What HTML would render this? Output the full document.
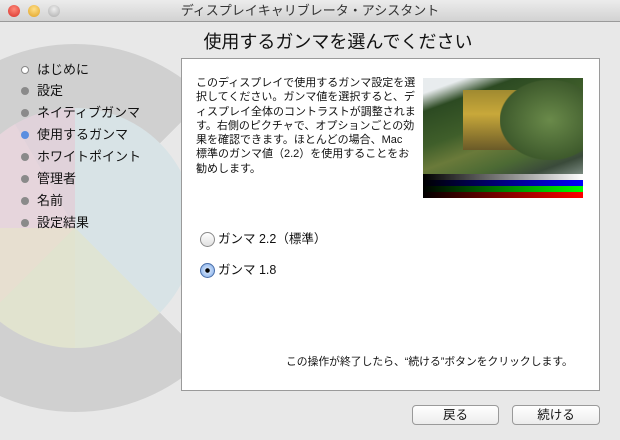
<!DOCTYPE html>
<html><head><meta charset="utf-8"><style>
*{margin:0;padding:0;box-sizing:border-box}
body{width:620px;height:440px;overflow:hidden;background:#e8e8e8;font-family:"Liberation Sans","Noto Sans CJK JP",sans-serif;color:#111;position:relative}
.tb{position:absolute;left:0;top:0;width:620px;height:22px;background:linear-gradient(#ececec,#d2d2d2);border-bottom:1px solid #9a9a9a;text-align:center;font-size:13px;line-height:22px;color:#333}
.l{position:absolute;top:5px;width:12px;height:12px;border-radius:50%}
.abs{position:absolute}
.side div{position:absolute;left:37px;font-size:13px;height:16px;line-height:16px}
.side i{position:absolute;left:-16px;top:4px;width:8px;height:8px;border-radius:50%;background:#8a8a8a}
.panel{position:absolute;left:181px;top:58px;width:419px;height:333px;background:#fff;border:1px solid #9a9a9a}
.desc{position:absolute;left:196px;top:76px;font-size:11px;line-height:14.3px;white-space:nowrap}
.btn{position:absolute;top:405px;height:20px;border:1px solid #9a9a9a;border-radius:4px;background:linear-gradient(#fff,#ececec);font-size:12.5px;text-align:center;line-height:18px}
.radio{position:absolute;left:200px;width:15px;height:15px;border-radius:50%;border:1px solid #8a8a8a;background:linear-gradient(#fff,#e0e0e0)}
</style></head><body>
<div class="abs" style="left:-109px;top:44px;width:368px;height:368px;border-radius:50%;background:conic-gradient(from 0deg,#d0d0d0 0deg 45deg,transparent 45deg 135deg,#d0d0d0 135deg 360deg)"></div>
<div class="abs" style="left:-45px;top:108px;width:240px;height:240px;border-radius:50%;background:conic-gradient(from 0deg,#d8e3e6 0deg 135deg,#dfe4d4 135deg 180deg,#e1e3cf 180deg 225deg,#e7dfd0 225deg 270deg,#e6d5dc 270deg 330deg,#e0d2da 330deg 360deg)"></div>
<div class="tb">
<span class="l" style="left:8px;background:radial-gradient(circle at 50% 35%,#ff8a7a,#d8302a)"></span>
<span class="l" style="left:28px;background:radial-gradient(circle at 50% 35%,#ffe08a,#e0a020)"></span>
<span class="l" style="left:48px;background:radial-gradient(circle at 50% 35%,#eee,#aaa)"></span>
ディスプレイキャリブレータ・アシスタント</div>
<div class="abs" style="top:30px;width:320px;text-align:center;font-size:18px;line-height:24px;color:#111;left:178px">使用するガンマを選んでください</div>
<div class="side">
<div style="top:62px"><i style="background:#fff;border:1px solid #888"></i>はじめに</div>
<div style="top:83px"><i></i>設定</div>
<div style="top:105px"><i></i>ネイティブガンマ</div>
<div style="top:127px"><i style="background:#5a8ee0"></i>使用するガンマ</div>
<div style="top:149px"><i></i>ホワイトポイント</div>
<div style="top:171px"><i></i>管理者</div>
<div style="top:193px"><i></i>名前</div>
<div style="top:215px"><i></i>設定結果</div>
</div>
<div class="panel"></div>
<div class="desc">このディスプレイで使用するガンマ設定を選<br>択してください。ガンマ値を選択すると、デ<br>ィスプレイ全体のコントラストが調整されま<br>す。右側のピクチャで、オプションごとの効<br>果を確認できます。ほとんどの場合、Mac<br>標準のガンマ値（2.2）を使用することをお<br>勧めします。</div>
<div class="abs" style="left:423px;top:78px;width:160px;height:96px;background:linear-gradient(160deg,#e8ecee 0%,#e8ecee 10%,#2c4a22 22%,#3f5e2a 45%,#6a7a3a 60%,#4c6a34 75%,#3a4a3a 88%,#7a8a80 100%)"></div>
<div class="abs" style="left:463px;top:90px;width:55px;height:60px;background:linear-gradient(#a08a30,#c8a83a 40%,#6a5a28)"></div>
<div class="abs" style="left:500px;top:80px;width:83px;height:80px;background:radial-gradient(ellipse at 60% 50%,#6a8a4a,#3e5a2c 70%,transparent 72%)"></div>
<div class="abs" style="left:423px;top:174px;width:160px;height:6px;background:linear-gradient(90deg,#000,#fff)"></div>
<div class="abs" style="left:423px;top:180px;width:160px;height:6px;background:linear-gradient(90deg,#000,#00f)"></div>
<div class="abs" style="left:423px;top:186px;width:160px;height:6px;background:linear-gradient(90deg,#000,#0f0)"></div>
<div class="abs" style="left:423px;top:192px;width:160px;height:6px;background:linear-gradient(90deg,#000,#f00)"></div>
<div class="radio" style="top:232px"></div>
<div class="abs" style="left:218px;top:231px;font-size:12.5px;line-height:16px">ガンマ 2.2（標準）</div>
<div class="radio" style="top:263px;background:radial-gradient(circle,#000 0 2px,#c8dcf8 2.5px,#7aa8e8);border-color:#4a6ea8"></div>
<div class="abs" style="left:218px;top:262px;font-size:12.5px;line-height:16px">ガンマ 1.8</div>
<div class="abs" style="left:286px;top:355px;font-size:10.8px;line-height:14px;white-space:nowrap">この操作が終了したら、“続ける”ボタンをクリックします。</div>
<div class="btn" style="left:412px;width:87px">戻る</div>
<div class="btn" style="left:512px;width:88px">続ける</div>
</body></html>
